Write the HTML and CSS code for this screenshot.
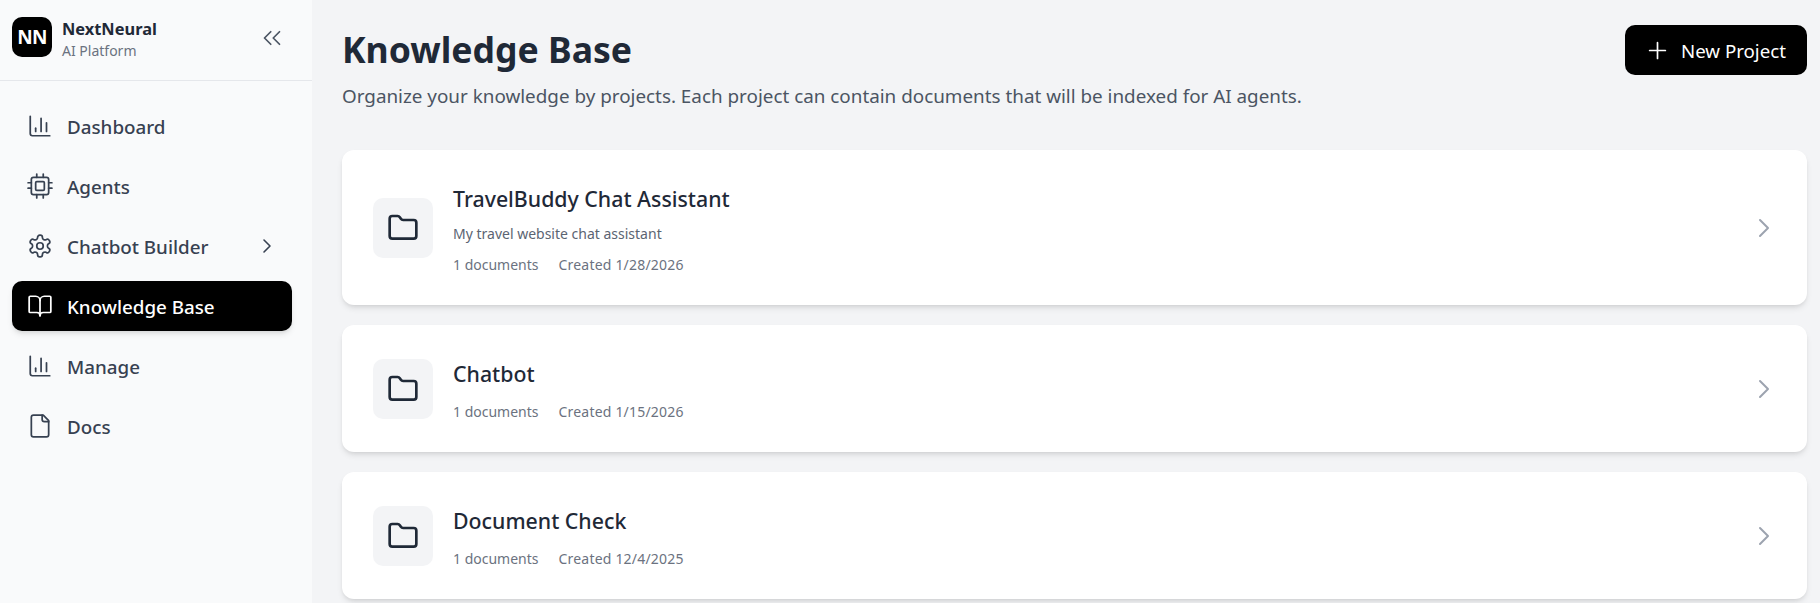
FILE: index.html
```html
<!DOCTYPE html>
<html lang="en">
<head>
    <meta charset="UTF-8">
    <title>Knowledge Base</title>
    <link rel="stylesheet" href="styles.css">
</head>
<body>
    <div class="app">
        <aside class="sidebar">
            <div class="brand">
                <div class="brand-logo">NN</div>
                <div class="brand-text">
                    <div class="brand-name">NextNeural</div>
                    <div class="brand-sub">AI Platform</div>
                </div>
                <svg class="collapse" viewBox="0 0 24 24"><path d="m11 17-5-5 5-5"/><path d="m18 17-5-5 5-5"/></svg>
            </div>
            <nav class="nav">
                <a class="nav-item">
                    <svg class="nav-icon" viewBox="0 0 24 24"><path d="M3 3v16a2 2 0 0 0 2 2h16"/><path d="M18 17V9"/><path d="M13 17V5"/><path d="M8 17v-3"/></svg>
                    Dashboard
                </a>
                <a class="nav-item">
                    <svg class="nav-icon" viewBox="0 0 24 24"><rect x="4" y="4" width="16" height="16" rx="2"/><rect x="8" y="8" width="8" height="8" rx="1"/><path d="M9 1v3M15 1v3M9 20v3M15 20v3M20 9h3M20 14h3M1 9h3M1 14h3"/></svg>
                    Agents
                </a>
                <a class="nav-item">
                    <svg class="nav-icon" viewBox="0 0 24 24"><path d="M12.22 2h-.44a2 2 0 0 0-2 2v.18a2 2 0 0 1-1 1.73l-.43.25a2 2 0 0 1-2 0l-.15-.08a2 2 0 0 0-2.73.73l-.22.38a2 2 0 0 0 .73 2.73l.15.1a2 2 0 0 1 1 1.72v.51a2 2 0 0 1-1 1.74l-.15.09a2 2 0 0 0-.73 2.73l.22.38a2 2 0 0 0 2.73.73l.15-.08a2 2 0 0 1 2 0l.43.25a2 2 0 0 1 1 1.73V20a2 2 0 0 0 2 2h.44a2 2 0 0 0 2-2v-.18a2 2 0 0 1 1-1.73l.43-.25a2 2 0 0 1 2 0l.15.08a2 2 0 0 0 2.73-.73l.22-.39a2 2 0 0 0-.73-2.73l-.15-.08a2 2 0 0 1-1-1.74v-.5a2 2 0 0 1 1-1.74l.15-.09a2 2 0 0 0 .73-2.73l-.22-.38a2 2 0 0 0-2.73-.73l-.15.08a2 2 0 0 1-2 0l-.43-.25a2 2 0 0 1-1-1.73V4a2 2 0 0 0-2-2z"/><circle cx="12" cy="12" r="3"/></svg>
                    Chatbot Builder
                    <svg class="nav-caret" viewBox="0 0 24 24"><path d="m9 18 6-6-6-6"/></svg>
                </a>
                <a class="nav-item active">
                    <svg class="nav-icon" viewBox="0 0 24 24"><path d="M12 7v14"/><path d="M3 18a1 1 0 0 1-1-1V4a1 1 0 0 1 1-1h5a4 4 0 0 1 4 4 4 4 0 0 1 4-4h5a1 1 0 0 1 1 1v13a1 1 0 0 1-1 1h-6a3 3 0 0 0-3 3 3 3 0 0 0-3-3z"/></svg>
                    Knowledge Base
                </a>
                <a class="nav-item">
                    <svg class="nav-icon" viewBox="0 0 24 24"><path d="M3 3v16a2 2 0 0 0 2 2h16"/><path d="M18 17V9"/><path d="M13 17V5"/><path d="M8 17v-3"/></svg>
                    Manage
                </a>
                <a class="nav-item">
                    <svg class="nav-icon" viewBox="0 0 24 24"><path d="M15 2H6a2 2 0 0 0-2 2v16a2 2 0 0 0 2 2h12a2 2 0 0 0 2-2V7z"/><path d="M14 2v4a2 2 0 0 0 2 2h4"/></svg>
                    Docs
                </a>
            </nav>
        </aside>

        <main class="main">
            <div class="page-head">
                <div>
                    <h1>Knowledge Base</h1>
                    <p class="page-sub">Organize your knowledge by projects. Each project can contain documents that will be indexed for AI agents.</p>
                </div>
                <button class="new-btn">
                    <svg viewBox="0 0 24 24"><path d="M5 12h14"/><path d="M12 5v14"/></svg>
                    New Project
                </button>
            </div>

            <div class="project-list">
                <div class="project-card">
                    <div class="folder-box">
                        <svg viewBox="0 0 24 24"><path d="M20 20a2 2 0 0 0 2-2V8a2 2 0 0 0-2-2h-7.9a2 2 0 0 1-1.69-.9L9.6 3.9A2 2 0 0 0 7.93 3H4a2 2 0 0 0-2 2v13a2 2 0 0 0 2 2Z"/></svg>
                    </div>
                    <div class="project-info">
                        <div class="project-title">TravelBuddy Chat Assistant</div>
                        <div class="project-desc">My travel website chat assistant</div>
                        <div class="project-meta"><span>1 documents</span><span>Created 1/28/2026</span></div>
                    </div>
                    <svg class="card-caret" viewBox="0 0 24 24"><path d="m9 18 6-6-6-6"/></svg>
                </div>
                <div class="project-card">
                    <div class="folder-box">
                        <svg viewBox="0 0 24 24"><path d="M20 20a2 2 0 0 0 2-2V8a2 2 0 0 0-2-2h-7.9a2 2 0 0 1-1.69-.9L9.6 3.9A2 2 0 0 0 7.93 3H4a2 2 0 0 0-2 2v13a2 2 0 0 0 2 2Z"/></svg>
                    </div>
                    <div class="project-info">
                        <div class="project-title">Chatbot</div>
                        <div class="project-meta"><span>1 documents</span><span>Created 1/15/2026</span></div>
                    </div>
                    <svg class="card-caret" viewBox="0 0 24 24"><path d="m9 18 6-6-6-6"/></svg>
                </div>
                <div class="project-card">
                    <div class="folder-box">
                        <svg viewBox="0 0 24 24"><path d="M20 20a2 2 0 0 0 2-2V8a2 2 0 0 0-2-2h-7.9a2 2 0 0 1-1.69-.9L9.6 3.9A2 2 0 0 0 7.93 3H4a2 2 0 0 0-2 2v13a2 2 0 0 0 2 2Z"/></svg>
                    </div>
                    <div class="project-info">
                        <div class="project-title">Document Check</div>
                        <div class="project-meta"><span>1 documents</span><span>Created 12/4/2025</span></div>
                    </div>
                    <svg class="card-caret" viewBox="0 0 24 24"><path d="m9 18 6-6-6-6"/></svg>
                </div>
            </div>
        </main>
    </div>
</body>
</html>
```

FILE: styles.css
```css
html, body {
    margin: 0;
    height: 100%;
    overflow: hidden;
}
body {
    font-family: "Noto Sans", "Open Sans", sans-serif;
    background-color: #f3f4f6;
    color: #1f2937;
}
svg {
    fill: none;
    stroke: currentColor;
    stroke-width: 2;
    stroke-linecap: round;
    stroke-linejoin: round;
    flex-shrink: 0;
}
.app {
    display: flex;
    height: 603px;
}
.sidebar {
    width: 312px;
    flex-shrink: 0;
    background-color: #f9fafb;
}
.brand {
    display: flex;
    align-items: center;
    height: 80px;
    padding: 0 25px 0 12px;
    border-bottom: 1px solid #e5e7eb;
}
.brand-logo {
    width: 40px;
    height: 40px;
    margin-top: -6px;
    border-radius: 10px;
    background-color: #000;
    color: #fff;
    font-size: 19px;
    font-weight: 700;
    letter-spacing: -0.8px;
    display: flex;
    align-items: center;
    justify-content: center;
}
.brand-text {
    margin-left: 10px;
    flex: 1;
    margin-top: -3px;
}
.brand-name {
    font-size: 16.4px;
    font-weight: 700;
    line-height: 23px;
    color: #1f2937;
}
.brand-sub {
    font-size: 14px;
    line-height: 21px;
    color: #6b7280;
}
.collapse {
    width: 30px;
    height: 30px;
    margin-top: -5px;
    stroke-width: 1.4;
    color: #4b5563;
}
.nav {
    display: flex;
    flex-direction: column;
    gap: 10px;
    padding: 20px 20px 0 12px;
}
.nav-item {
    display: flex;
    align-items: center;
    height: 50px;
    padding: 2px 13px 0 15px;
    box-sizing: border-box;
    border-radius: 10px;
    font-size: 18.8px;
    font-weight: 500;
    color: #374151;
}
.nav-icon {
    width: 26px;
    height: 26px;
    margin: -3px 14px 0 0;
    stroke-width: 1.6;
}
.nav-caret {
    width: 24px;
    height: 24px;
    margin: -3px 0 0 auto;
    stroke-width: 1.6;
}
.nav-item.active {
    background-color: #000;
    color: #fff;
    box-shadow: 0 4px 6px -1px rgba(0, 0, 0, 0.1), 0 2px 4px -2px rgba(0, 0, 0, 0.1);
}
.main {
    flex: 1;
    min-width: 0;
    padding: 25px 13px 0 30px;
}
.page-head {
    display: flex;
    justify-content: space-between;
    align-items: flex-start;
    margin-bottom: 31px;
}
h1 {
    margin: 0;
    font-size: 35.6px;
    line-height: 48px;
    font-weight: 700;
    color: #1f2937;
}
.page-sub {
    margin: 0;
    font-size: 18.85px;
    line-height: 46px;
    color: #4b5563;
}
.new-btn {
    display: flex;
    align-items: center;
    gap: 10px;
    width: 182px;
    height: 50px;
    padding: 0 19px;
    border: none;
    border-radius: 10px;
    background-color: #000;
    color: #fff;
    font-family: inherit;
    font-size: 18.7px;
    font-weight: 400;
    box-sizing: border-box;
    white-space: nowrap;
}
.new-btn svg {
    width: 27px;
    height: 27px;
    stroke-width: 1.5;
}
.project-list {
    display: flex;
    flex-direction: column;
    gap: 20px;
}
.project-card {
    display: flex;
    align-items: center;
    background-color: #fff;
    border-radius: 12px;
    padding: 30px 27px 30px 31px;
    box-shadow: 0 4px 6px -1px rgba(0, 0, 0, 0.1), 0 2px 4px -2px rgba(0, 0, 0, 0.1);
}
.folder-box {
    width: 60px;
    height: 60px;
    border-radius: 10px;
    background-color: #f3f4f6;
    color: #1f2937;
    display: flex;
    align-items: center;
    justify-content: center;
    flex-shrink: 0;
}
.folder-box svg {
    width: 32px;
    height: 32px;
}
.project-info {
    margin-left: 20px;
    flex: 1;
}
.project-title {
    font-size: 21.3px;
    font-weight: 500;
    line-height: 36px;
    margin: 1px 0 -1px;
    color: #1f2937;
}
.project-desc {
    font-size: 14px;
    line-height: 20px;
    margin: 8px 0 1px;
    color: #5b6472;
}
.project-meta {
    display: flex;
    gap: 20px;
    margin-top: 11px;
    font-size: 14px;
    line-height: 20px;
    color: #6b7280;
}
.project-meta span + span {
    letter-spacing: 0.2px;
}
.card-caret {
    width: 32px;
    height: 32px;
    color: #9ca3af;
    stroke-width: 1.5;
}
```
